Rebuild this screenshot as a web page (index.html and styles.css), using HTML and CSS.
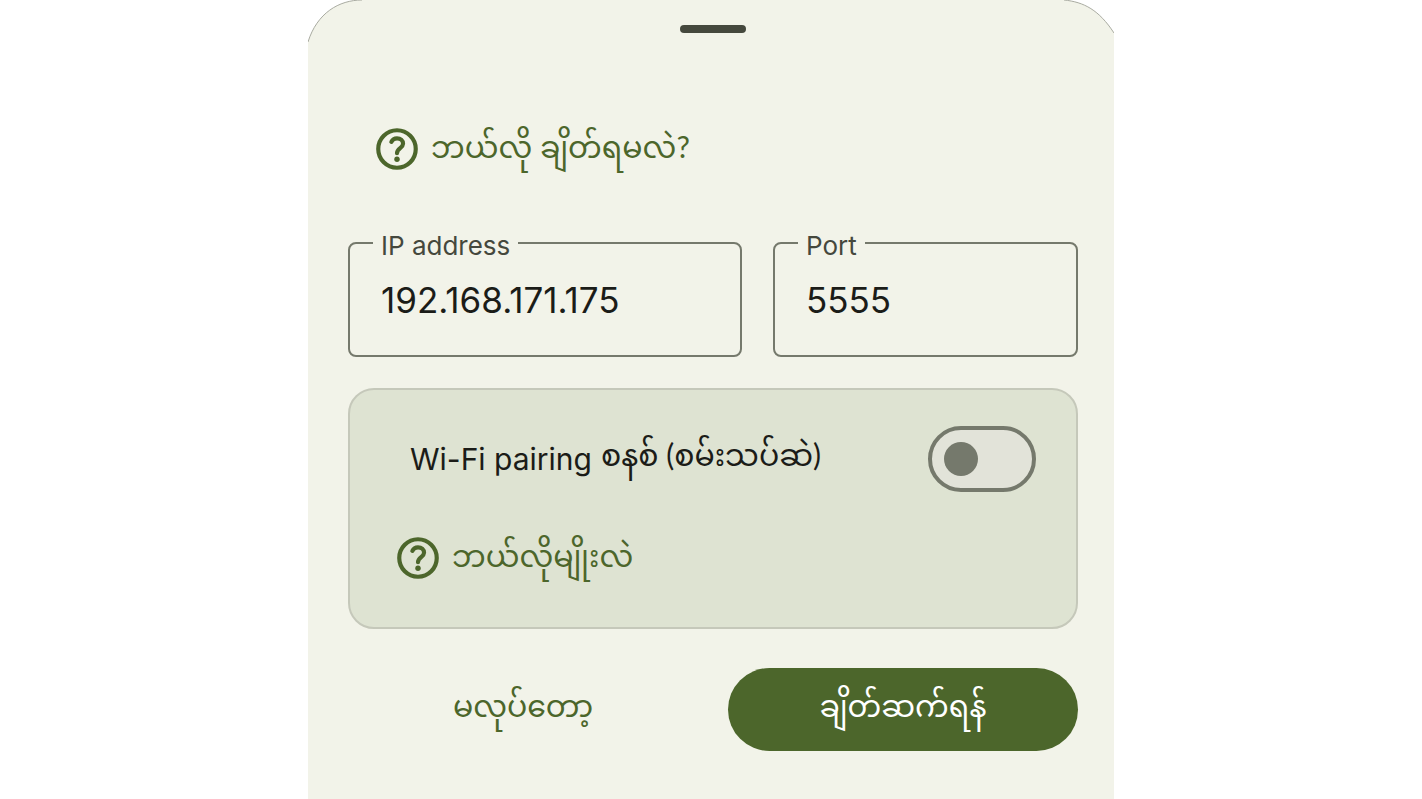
FILE: index.html
```html
<!DOCTYPE html>
<html lang="my">
<head>
<meta charset="utf-8">
<meta name="viewport" content="width=device-width, initial-scale=1">
<title>IP address</title>
<link rel="stylesheet" href="styles.css">
</head>
<body>
<main class="sheet">
  <svg class="corner corner-left" viewBox="0 0 54 42" aria-hidden="true"><path class="corner-fill" d="M0 0H54C31 0 9 13 0 42Z"/><path class="corner-edge" d="M54 0C31 0 9 13 0 42"/></svg>
  <svg class="corner corner-right" viewBox="0 0 54 42" aria-hidden="true"><path class="corner-fill" d="M54 0H4C24 2 39 10 54 33Z"/><path class="corner-edge" d="M4 0C24 2 39 10 54 33"/></svg>
  <div class="handle"></div>
  <a class="help" href="#">
    <svg class="icon" viewBox="0 0 24 24" aria-hidden="true"><circle cx="12" cy="12" r="9"/><path d="M9.3 8.6C9.8 7.5 10.8 6.9 12 6.9C13.7 6.9 14.9 8 14.9 9.5C14.9 11.5 12 11.7 12 14"/><circle class="dot" cx="12" cy="16.9" r="1.3"/></svg>
    <span class="help-text">ဘယ်လို ချိတ်ရမလဲ?</span>
  </a>
  <form class="form">
    <div class="fields">
      <fieldset class="field">
        <legend><label for="ip">IP address</label></legend>
        <input id="ip" type="text" value="192.168.171.175">
      </fieldset>
      <fieldset class="field">
        <legend><label for="port">Port</label></legend>
        <input id="port" type="text" value="5555">
      </fieldset>
    </div>
    <section class="card">
      <div class="pairing">
        <label class="pairing-label" for="pairing"><span class="latin">Wi-Fi pairing</span> <span>စနစ် (စမ်းသပ်ဆဲ)</span></label>
        <input class="switch" id="pairing" type="checkbox" role="switch">
      </div>
      <a class="help help-card" href="#">
        <svg class="icon" viewBox="0 0 24 24" aria-hidden="true"><circle cx="12" cy="12" r="9"/><path d="M9.3 8.6C9.8 7.5 10.8 6.9 12 6.9C13.7 6.9 14.9 8 14.9 9.5C14.9 11.5 12 11.7 12 14"/><circle class="dot" cx="12" cy="16.9" r="1.3"/></svg>
        <span class="help-text">ဘယ်လိုမျိုးလဲ</span>
      </a>
    </section>
    <div class="actions">
      <button class="button" type="button">မလုပ်တော့</button>
      <button class="button button-filled" type="button">ချိတ်ဆက်ရန်</button>
    </div>
  </form>
</main>
</body>
</html>
```
FILE: styles.css
```css
* { box-sizing: border-box; }
body {
  margin: 0;
  background: #fff;
  color: #1b1c18;
  font-family: Lato, "Noto Sans", "Noto Sans Myanmar", sans-serif;
  font-size: 30px;
}
.sheet {
  position: relative;
  width: 100%;
  max-width: 806px;
  min-height: 100vh;
  margin: 0 auto;
  padding: 25px 36px 48px 40px;
  background: #f2f3e9;
}
.corner { position: absolute; top: 0; width: 54px; height: 42px; }
.corner-left { left: 0; }
.corner-right { right: 0; }
.corner-fill { fill: #fff; }
.corner-edge { fill: none; stroke: #a9aba1; stroke-width: 1; }
.handle {
  width: 66px;
  height: 8px;
  margin: 0 auto;
  border-radius: 4px;
  background: #45483d;
}
.help {
  display: flex;
  align-items: center;
  gap: 9px;
  width: fit-content;
  height: 50px;
  margin: 91px 0 0 24px;
  color: #4c662b;
  line-height: 44px;
  text-decoration: none;
}
.help-text { padding-bottom: 6px; }
.icon {
  width: 50px;
  height: 50px;
  fill: none;
  stroke: currentColor;
  stroke-width: 2;
  stroke-linecap: round;
}
.icon .dot { fill: currentColor; stroke: none; }
.form { margin-top: 54px; }
.fields { display: grid; grid-template-columns: 394fr 305fr; gap: 31px; }
.field {
  min-width: 0;
  margin: 0;
  padding: 10px 31px 23px;
  border: 2px solid #75796c;
  border-radius: 8px;
  font-family: Inter, sans-serif;
}
.field legend {
  margin-left: -8px;
  padding: 6px 8px 0;
  color: #45483d;
  font-size: 26px;
  line-height: 24px;
}
.field input {
  display: block;
  width: 100%;
  height: 64px;
  padding: 0;
  border: 0;
  outline: 0;
  background: none;
  color: inherit;
  font: inherit;
  font-size: 35px;
}
.card {
  margin-top: 31px;
  padding: 36px 40px 44px;
  border: 2px solid #c5c8ba;
  border-radius: 26px;
  background: #dee3d2;
}
.pairing {
  display: flex;
  align-items: center;
  justify-content: space-between;
  padding-left: 20px;
}
.pairing-label { display: flex; align-items: center; gap: 9px; }
.latin { font-family: Inter, sans-serif; }
.switch {
  appearance: none;
  display: flex;
  align-items: center;
  width: 108px;
  height: 66px;
  margin: 0;
  padding: 0 12px;
  border: 4px solid #75796c;
  border-radius: 33px;
  background: #e2e3d9;
}
.switch::before {
  content: "";
  width: 34px;
  height: 34px;
  border-radius: 50%;
  background: #75796c;
}
.help-card { margin: 41px 0 0 24px; margin-left: 3px; }
.actions { display: grid; grid-template-columns: 1fr 1fr; gap: 30px; margin-top: 39px; }
.button {
  height: 83px;
  padding: 0;
  border: 0;
  border-radius: 42px;
  background: none;
  color: #4c662b;
  font: inherit;
}
.button-filled { background: #4c662b; color: #fff; }
```
